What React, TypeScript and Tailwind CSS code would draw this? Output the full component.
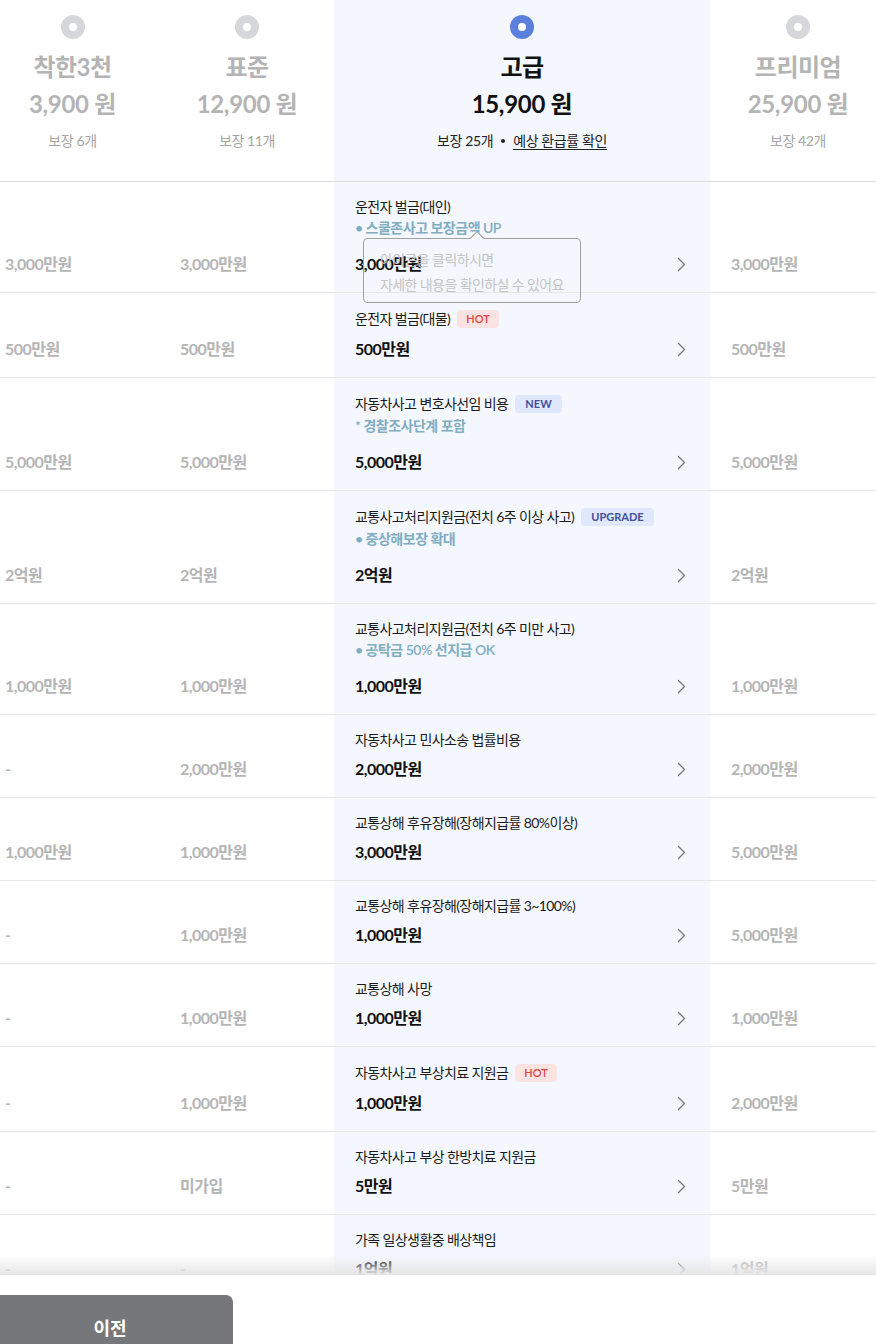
import React from "react";

type Row = {
  title: string;
  badge?: "HOT" | "NEW" | "UPGRADE";
  sub?: string;
  vals: [string, string, string, string];
  tooltip?: boolean;
};

const rows: Row[] = [
  { title: "운전자 벌금(대인)", sub: "• 스쿨존사고 보장금액 UP", vals: ["3,000만원", "3,000만원", "3,000만원", "3,000만원"], tooltip: true },
  { title: "운전자 벌금(대물)", badge: "HOT", vals: ["500만원", "500만원", "500만원", "500만원"] },
  { title: "자동차사고 변호사선임 비용", badge: "NEW", sub: "* 경찰조사단계 포함", vals: ["5,000만원", "5,000만원", "5,000만원", "5,000만원"] },
  { title: "교통사고처리지원금(전치 6주 이상 사고)", badge: "UPGRADE", sub: "• 중상해보장 확대", vals: ["2억원", "2억원", "2억원", "2억원"] },
  { title: "교통사고처리지원금(전치 6주 미만 사고)", sub: "• 공탁금 50% 선지급 OK", vals: ["1,000만원", "1,000만원", "1,000만원", "1,000만원"] },
  { title: "자동차사고 민사소송 법률비용", vals: ["-", "2,000만원", "2,000만원", "2,000만원"] },
  { title: "교통상해 후유장해(장해지급률 80%이상)", vals: ["1,000만원", "1,000만원", "3,000만원", "5,000만원"] },
  { title: "교통상해 후유장해(장해지급률 3~100%)", vals: ["-", "1,000만원", "1,000만원", "5,000만원"] },
  { title: "교통상해 사망", vals: ["-", "1,000만원", "1,000만원", "1,000만원"] },
  { title: "자동차사고 부상치료 지원금", badge: "HOT", vals: ["-", "1,000만원", "1,000만원", "2,000만원"] },
  { title: "자동차사고 부상 한방치료 지원금", vals: ["-", "미가입", "5만원", "5만원"] },
  { title: "가족 일상생활중 배상책임", vals: ["-", "-", "1억원", "1억원"] },
];

const plans = [
  { name: "착한3천", price: "3,900 원", count: "보장 6개" },
  { name: "표준", price: "12,900 원", count: "보장 11개" },
  { name: "고급", price: "15,900 원", count: "보장 25개" },
  { name: "프리미엄", price: "25,900 원", count: "보장 42개" },
];

function Badge({ kind }: { kind: "HOT" | "NEW" | "UPGRADE" }) {
  if (kind === "HOT")
    return (
      <span className="inline-flex h-[18px] items-center rounded-[4px] bg-[#fbe3e1] px-[9px] text-[11px] font-semibold text-[#e2453f]">
        HOT
      </span>
    );
  return (
    <span className="inline-flex h-[18px] items-center rounded-[4px] bg-[#dfe8fc] px-[10px] text-[11px] font-bold text-[#3e4f9c]">
      {kind}
    </span>
  );
}

function Chevron() {
  return (
    <svg width="9" height="15" viewBox="0 0 9 15" fill="none">
      <path d="M1.5 1.5L7.5 7.5L1.5 13.5" stroke="#7a7a7a" strokeWidth="1.4" strokeLinecap="round" strokeLinejoin="round" />
    </svg>
  );
}

function Radio({ on }: { on: boolean }) {
  return (
    <div className={`flex h-6 w-6 items-center justify-center rounded-full ${on ? "bg-[#5b80dc]" : "bg-[#d6d7db]"}`}>
      <div className="h-2 w-2 rounded-full bg-white" />
    </div>
  );
}

export default function App() {
  return (
    <div
      className="flex h-[1344px] w-[876px] flex-col overflow-hidden bg-white"
      style={{ fontFamily: "Lato, 'Noto Sans CJK KR', sans-serif" }}
    >
      <div className="relative flex-1 overflow-hidden">
        <div className="ml-[-15px] w-[901px]">
          {/* Header */}
          <div className="grid grid-cols-[175px_174px_376px_176px] border-b border-[#dcdcdc]">
            {plans.map((p, i) => {
              const on = i === 2;
              return (
                <div
                  key={p.name}
                  className={`flex flex-col items-center pt-[15px] pb-[30px] ${on ? "bg-[#f4f7fd]" : ""}`}
                >
                  <Radio on={on} />
                  <div className={`mt-3 text-[24px] font-bold leading-[32px] tracking-[-0.5px] ${on ? "text-[#111]" : "text-[#b4b4b4]"}`}>
                    {p.name}
                  </div>
                  <div className={`mt-[5px] text-[24px] font-bold leading-[32px] tracking-[-0.3px] ${on ? "text-[#111]" : "text-[#b4b4b4]"}`}>
                    {p.price}
                  </div>
                  <div className={`mt-[11px] flex items-center text-[14px] leading-[20px] tracking-[-0.4px] ${on ? "text-[#222]" : "text-[#a5a5a5]"}`}>
                    {p.count}
                    {on && (
                      <>
                        <span className="mx-[8px] inline-block h-[4px] w-[4px] rounded-full bg-[#222]" />
                        <span className="underline underline-offset-[3px]">예상 환급률 확인</span>
                      </>
                    )}
                  </div>
                </div>
              );
            })}
          </div>

          {/* Rows */}
          {rows.map((r, idx) => (
            <div key={idx} className="grid grid-cols-[175px_174px_376px_176px] border-b border-[#e6e6e6]">
              <div className="flex items-end pb-4 pl-5">
                <span className="text-[16px] font-bold leading-[24px] tracking-[-0.5px] text-[#b5b5b5]">{r.vals[0]}</span>
              </div>
              <div className="flex items-end pb-4 pl-5">
                <span className="text-[16px] font-bold leading-[24px] tracking-[-0.5px] text-[#b5b5b5]">{r.vals[1]}</span>
              </div>
              <div className="relative flex flex-col bg-[#f4f7fd] pt-[15px] pb-4 pl-[21px] pr-[24px]">
                <div className={`flex items-center gap-[7px] ${r.badge ? "h-[22px]" : "h-[20px]"}`}>
                  <span className="text-[14px] leading-[20px] tracking-[-0.6px] text-[#1a1a1a]">{r.title}</span>
                  {r.badge && <Badge kind={r.badge} />}
                </div>
                {r.sub && (
                  <div className="mt-[1px] text-[14px] font-semibold leading-[20px] tracking-[-0.5px] text-[#80adc2]">{r.sub}</div>
                )}
                <div className={`relative flex items-center justify-between ${r.sub ? "mt-[14px]" : "mt-[7px]"}`}>
                  <span className="text-[16px] font-bold leading-[24px] tracking-[-0.5px] text-[#111]">{r.vals[2]}</span>
                  <Chevron />
                </div>
                {r.tooltip && (
                  <div className="absolute left-[29px] top-[56px] z-20 h-[65px] w-[218px] rounded-[4px] border border-[#a0a0a0] px-[16px] pt-[8px]">
                    <div className="absolute left-[108px] top-[-6px] h-[10px] w-[10px] rotate-45 border-l border-t border-[#a0a0a0] bg-[#f4f7fd]" />
                    <div className="whitespace-nowrap text-[14px] leading-[25px] tracking-[-0.6px] text-[#c4c4c4]">아이콘을 클릭하시면</div>
                    <div className="whitespace-nowrap text-[14px] leading-[25px] tracking-[-0.6px] text-[#c4c4c4]">자세한 내용을 확인하실 수 있어요</div>
                  </div>
                )}
              </div>
              <div className="flex items-end pb-4 pl-[21px]">
                <span className="text-[16px] font-bold leading-[24px] tracking-[-0.5px] text-[#b5b5b5]">{r.vals[3]}</span>
              </div>
            </div>
          ))}
        </div>
        <div className="pointer-events-none absolute bottom-0 left-0 right-0 h-[20px] bg-gradient-to-b from-[rgba(230,230,230,0)] to-[#e6e6e6]" />
      </div>

      <div className="h-[69px] shrink-0 overflow-hidden bg-white pt-[20px]">
        <button className="ml-[-13px] flex h-[60px] w-[246px] items-start justify-center rounded-tr-[7px] bg-[#76777b] pt-[20px] text-[18px] font-bold leading-[26px] text-white">
          이전
        </button>
      </div>
    </div>
  );
}
